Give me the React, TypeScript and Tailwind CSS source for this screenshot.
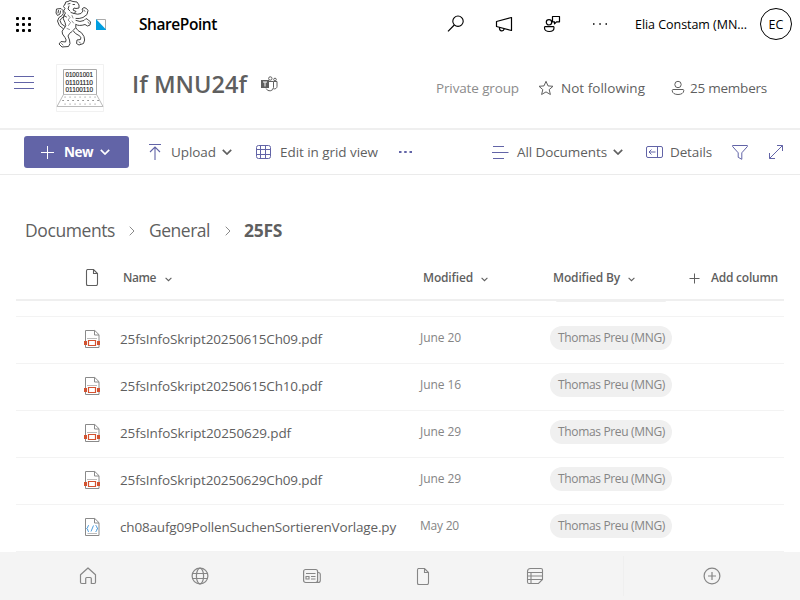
import { useLayoutEffect, useRef, useState, type ReactNode } from "react";

/** Single line of text whose tracking is computed so it spans `w` pixels. */
function Fit({ w, children, className = "" }: { w: number; children: string; className?: string }) {
  const ref = useRef<HTMLSpanElement>(null);
  const [spacing, setSpacing] = useState(0);
  useLayoutEffect(() => {
    if (ref.current) {
      const natural = ref.current.getBoundingClientRect().width;
      setSpacing((w - natural) / children.length);
    }
  }, [w, children]);
  return (
    <span ref={ref} className={`inline-block shrink-0 justify-self-start whitespace-nowrap ${className}`} style={{ letterSpacing: spacing }}>
      {children}
    </span>
  );
}

function Icon({ w = 16, h = 16, className = "", children }: { w?: number; h?: number; className?: string; children: ReactNode }) {
  return (
    <svg
      width={w}
      height={h}
      viewBox={`0 0 ${w} ${h}`}
      fill="none"
      stroke="currentColor"
      strokeWidth="1"
      className={`shrink-0 ${className}`}
    >
      {children}
    </svg>
  );
}

function Chevron({ className = "" }: { className?: string }) {
  return (
    <Icon w={10} h={6} className={className}>
      <path d="M.8.8 5 5 9.2.8" strokeWidth="1.7" />
    </Icon>
  );
}

function SmallChevron() {
  return (
    <Icon w={7} h={5} className="mt-0.5">
      <path d="M.6.8 3.5 3.7 6.4.8" strokeWidth="1.1" />
    </Icon>
  );
}

function Lion() {
  return (
    <Icon w={37} h={48} className="text-[#444]">
      <g strokeWidth="1" strokeLinejoin="round" strokeLinecap="round">
        <path d="M10 4Q10 1 13 1.500L15 .5 18 1.500 22 2 24 5 24 8 21 8.500 19 8 18 10 21 11.500 19 13.500 16 12.500" />
        <path d="M10 4 8.500 6.500 10 8.500 8.500 11 10.500 13 9 15.500 11.500 17M13 4 15 3.500M18 4.500h1.500M14 6 13 9 15 11" />
        <path d="M19 13.500Q23 15 26 13.500L28 11 27 9 29 7.500 31.500 8.500 33 10.500 32 14.500 28 17.500Q24 19 21 18.500" />
        <path d="M21 20.500Q25 22.500 29 20.500L31 18.500 33.500 20 35.500 22 35 25 32.500 26 30 24.500Q24 26.500 21 24.500" />
        <path d="M9 15Q7 19 10 22.500 12 26 9 28.500 6 31 7.500 34L10 37.500Q12 40 10.500 42L6 41.500 4 44 7 47 13.500 46.500Q16 44 14.500 40L13 36Q14 33 17 31.500" />
        <path d="M21 24.500Q22 28 18 30.500 20 34 24 35.500 27 37 25.500 39.500L22 40 21.500 43.500 24 45 28.500 43.500Q30.500 40 29 36.500 27 32 23 30.500L21 28" />
        <path d="M8.500 29Q3 26 2.500 21 3 17 7 15.500 9 14 8 10.500L6 8.500 1.500 9 1 13 2.500 15.500 5 14 5.500 11M10 26.500Q5 24 5 20.500 6 18 9 16.500M3.500 10.500 3 13" />
        <path d="M13 15 15 17.500 13 20 15.500 22.500 13.500 25.500M17 15.500 18 18M17 21 18.500 23M12 28.500 14.500 29.500" strokeWidth=".6" />
        <path d="M29 10 30 11.500M33 22 34 23.500M6.500 43.500 8 45M24 42 25.500 43" strokeWidth=".7" />
      </g>
    </Icon>
  );
}

function Laptop() {
  return (
    <svg width="48" height="48" viewBox="0 0 48 48" className="shrink-0" fill="none">
      <path d="M.5.5h47v47H.5z" stroke="#f1f1f1" />
      <path d="M7.5 31V5.5h33V31" stroke="#aaa" />
      <path d="M7.500 30.500h33L47 42.500H1z" stroke="#bbb" />
      <g fill="#222" fontFamily="Liberation Sans, sans-serif" fontSize="6.6" stroke="#222" strokeWidth=".15">
        <text x="9.500" y="13" textLength="27.500" lengthAdjust="spacingAndGlyphs">01001001</text>
        <text x="9.500" y="20.500" textLength="27.500" lengthAdjust="spacingAndGlyphs">01101110</text>
        <text x="9.500" y="28" textLength="27.500" lengthAdjust="spacingAndGlyphs">01100110</text>
      </g>
      <g stroke="#777" strokeWidth="1.1" strokeLinecap="round">
        <path d="M9 33h32" strokeDasharray=".1 4.9" />
        <path d="M7 36.500h36" strokeDasharray=".1 4.9" stroke="#333" />
        <path d="M9 40h32" strokeDasharray=".1 4.9" />
      </g>
    </svg>
  );
}

function Waffle() {
  return (
    <div className="grid shrink-0 grid-cols-3 gap-[3px] text-black">
      {Array.from({ length: 9 }, (_, i) => (
        <span key={i} className="size-[3px] rounded-[1px] bg-black" />
      ))}
    </div>
  );
}

function TopBar() {
  return (
    <header className="flex h-12 items-center pl-4 pr-2 text-black">
      <Waffle />
      <div className="ml-6 flex h-12 w-[51px] items-center">
        <Lion />
        <svg width="10" height="11" viewBox="0 0 10 11" className="ml-1 shrink-0">
          <path d="M.5.5h9v10h-9z" fill="#fff" stroke="#aaa" />
          <path d="M0 0 10 10.500V11H0z" fill="#009ee0" />
        </svg>
      </div>
      <Fit w={78} className="ml-[33px] text-[15.500px] font-semibold">SharePoint</Fit>
      <div className="ml-[230px] flex items-center">
        <Icon w={18} h={18}>
          <circle cx="11" cy="6.200" r="5.200" strokeWidth="1.100" />
          <path d="M7.300 10 1 16.300" strokeWidth="1.200" />
        </Icon>
        <Icon w={18} h={18} className="ml-[30px]">
          <path d="M1.500 6.500 16.500 2.500v13L1.500 11.500zM4.500 12.500v.8a2.300 2.300 0 0 0 4.600.5" strokeWidth="1.200" strokeLinejoin="round" />
        </Icon>
        <Icon w={18} h={18} className="ml-[30px]">
          <circle cx="6" cy="7.300" r="2.700" strokeWidth="1.200" />
          <path d="M2 11.700h8.500c.5 0 .5.500.5 1 0 2.500-2.300 3.800-4.800 3.800S1.500 15.200 1.500 12.700c0-.6 0-1 .5-1zM9.500 1.500h7v5.300h-3l-2 2V6.800h-2z" strokeWidth="1.200" strokeLinejoin="round" />
        </Icon>
        <Icon w={16} h={4} className="ml-[31px]">
          <path d="M1 2h1.500M7.300 2h1.500M13.500 2H15" strokeWidth="1.500" />
        </Icon>
      </div>
      <Fit w={112} className="ml-[27px] mt-px text-[12.500px]">Elia Constam (MN...</Fit>
      <div className="ml-auto flex size-8 items-center justify-center rounded-full border border-black pt-[2px]">
        <Fit w={15} className="text-[12.500px]">EC</Fit>
      </div>
    </header>
  );
}

function SiteHeader() {
  return (
    <section className="flex h-[82px] items-start border-b-2 border-[#efefef] pl-[14px]">
      <Icon w={20} h={15} className="mt-[27px] text-[#6264a7]">
        <path d="M0 1.500h20M0 7.500h20M0 13.500h20" strokeWidth="1.100" />
      </Icon>
      <div className="ml-[22px] mt-4"><Laptop /></div>
      <Fit w={115} className="ml-7 mt-[19px] text-[23.500px] font-semibold leading-[34px]">If MNU24f</Fit>
      <Icon w={17} h={17} className="ml-[14px] mt-7">
        <path d="M0 4h8v8H0z" fill="currentColor" stroke="none" />
        <path d="M2 6h4M4 6v4.500" stroke="#fff" />
        <circle cx="9.300" cy="2.500" r="1.700" />
        <circle cx="14" cy="3.500" r="1.300" />
        <path d="M8 5.500h4.500v6a3.800 3.800 0 0 1-7.300 1M12.500 5.500H16v5a2.500 2.500 0 0 1-3.500 2.200" />
      </Icon>
      <div className="ml-auto mt-[29px] flex h-[22px] items-center pr-[33px]">
        <Fit w={83} className="text-[13.500px] text-[#8c8c8c]">Private group</Fit>
        <Icon w={16} h={16} className="ml-[19px]">
          <path d="m8 1.300 2 4.600 5 .4-3.800 3.300 1.200 4.900L8 11.900l-4.400 2.600 1.200-4.900L1 6.300l5-.4z" strokeLinejoin="round" />
        </Icon>
        <Fit w={84} className="ml-[7px] text-[13.500px]">Not following</Fit>
        <Icon w={14} h={16} className="ml-[26px]">
          <circle cx="7" cy="4.500" r="3.200" />
          <path d="M2 9.500h10c.6 0 .8.500.8 1 0 2.700-2.600 4-5.800 4s-5.800-1.300-5.800-4c0-.5.200-1 .8-1z" />
        </Icon>
        <Fit w={77} className="ml-[5px] text-[13.500px]">25 members</Fit>
      </div>
    </section>
  );
}

function CommandBar() {
  return (
    <nav className="flex h-[45px] items-center border-b border-[#ebebeb] pl-6 pr-4 text-[13.500px]">
      <button className="flex h-8 w-[105px] items-center rounded-[3px] bg-[#6264a7] pl-[17px] text-white">
        <Icon w={13} h={13}>
          <path d="M6.500 0v13M0 6.500h13" />
        </Icon>
        <Fit w={29} className="ml-[10px] font-bold">New</Fit>
        <Chevron className="ml-[7px]" />
      </button>
      <Icon w={12} h={16} className="ml-5 text-[#6264a7]">
        <path d="M0 .5h12M6 16V3M1 8l5-5 5 5" strokeWidth="1.100" />
      </Icon>
      <Fit w={45} className="ml-[10px]">Upload</Fit>
      <Chevron className="ml-[6px]" />
      <Icon w={16} h={16} className="ml-6 text-[#6264a7]">
        <rect x=".5" y="1.500" width="14" height="13" rx="2" />
        <path d="M4.500 1.500v13M9.500 1.500v13M.5 5.500h14M.5 10.500h14" />
      </Icon>
      <Fit w={98} className="ml-2">Edit in grid view</Fit>
      <Icon w={14} h={4} className="ml-[21px] text-[#6264a7]">
        <path d="M0 2h2.500M5.200 2h2.500M10.500 2H13" strokeWidth="2" />
      </Icon>
      <div className="ml-auto flex items-center">
        <Icon w={17} h={15} className="text-[#6264a7]">
          <path d="M1 1.500h11M0 7.500h16.500M1 13.500h11" />
        </Icon>
        <Fit w={90} className="ml-2">All Documents</Fit>
        <Chevron className="ml-[6px]" />
        <Icon w={17} h={14} className="ml-[23px] text-[#6264a7]">
          <rect x=".5" y="1.500" width="16" height="11" rx="1.500" />
          <path d="M11.500 1.500v11M9.500 7H3M5.500 4.500 3 7l2.500 2.500" />
        </Icon>
        <Fit w={42} className="ml-[7px]">Details</Fit>
        <Icon w={16} h={16} className="ml-5 text-[#6264a7]">
          <path d="M.6 1.500h14.800v1L9.800 8.800v6.500l-3.600-2V8.800L.6 2.500z" strokeLinejoin="round" />
        </Icon>
        <Icon w={16} h={16} className="ml-5 text-[#6264a7]">
          <path d="M1.500 14.500l13-13M9 1.500h5.500V7M1.500 9v5.500H7" />
        </Icon>
      </div>
    </nav>
  );
}

function Breadcrumb() {
  const arrow = (
    <Icon w={6} h={10} className="text-[#8a8a8a]">
      <path d="m.7.7 4.300 4.300L.7 9.300" />
    </Icon>
  );
  return (
    <div className="mt-[39px] flex h-8 items-center pl-[25px] text-[17.500px]">
      <Fit w={90}>Documents</Fit>
      <span className="mx-[14px] pt-px">{arrow}</span>
      <Fit w={61}>General</Fit>
      <span className="ml-[15px] mr-[13px] pt-px">{arrow}</span>
      <Fit w={38} className="font-bold">25FS</Fit>
    </div>
  );
}

function FilePage({ className = "" }: { className?: string }) {
  return (
    <Icon w={14} h={17} className={className}>
      <path d="M1.500 2Q1.500.5 2.700.5H8.500L12.500 4.500V14.800Q12.500 16.500 11.300 16.500H2.700Q1.500 16.500 1.500 14.800zM8.500.5V4.500H12.500" strokeWidth="1.100" />
    </Icon>
  );
}

function PdfIcon() {
  return (
    <svg width="18" height="20" viewBox="0 0 18 20" fill="none" className="shrink-0">
      <path d="M2.500 18.500V1.500h9.300l4.200 4.200v12.800zM11.500 1.500v4.500h4.500" fill="#fff" stroke="#8a8a8a" />
      <path d="M4 9.500h10" stroke="#bbb" />
      <path d="M1 12h3v4H1zM14 12h3v4h-3z" fill="#d35230" />
      <path d="M5.500 11.500h7v5h-7z" fill="#fff" stroke="#d35230" strokeWidth="1.200" />
    </svg>
  );
}

function CodeIcon() {
  return (
    <svg width="18" height="20" viewBox="0 0 18 20" fill="none" className="shrink-0">
      <path d="M2.500 18.500V1.500h9.300l4.200 4.200v12.800zM11.500 1.500v4.500h4.500" fill="#fff" stroke="#8a8a8a" />
      <path d="M6 8.500q-1.200 0-1.200 1.300T3.500 11.500q1.300.2 1.300 1.700T6 14.500M12.500 8.500q1.200 0 1.200 1.300T15 11.500q-1.300.2-1.300 1.700t-1.200 1.300M10.500 8.500l-2.500 6" stroke="#3b93d9" strokeWidth=".9" />
      <path d="M4.500 16.500H14" stroke="#bbb" />
    </svg>
  );
}

const rows = [
  { name: "25fsInfoSkript20250615Ch09.pdf", w: 202, date: "June 20", dw: 41 },
  { name: "25fsInfoSkript20250615Ch10.pdf", w: 202, date: "June 16", dw: 41 },
  { name: "25fsInfoSkript20250629.pdf", w: 171, date: "June 29", dw: 41 },
  { name: "25fsInfoSkript20250629Ch09.pdf", w: 202, date: "June 29", dw: 41 },
  { name: "ch08aufg09PollenSuchenSortierenVorlage.py", w: 276, date: "May 20", dw: 39 },
];

const columns = "grid grid-cols-[104px_300px_130px_136px_98px]";

function FileTable() {
  return (
    <div className="mx-4 mt-[9px]">
      <div className={`${columns} h-[46px] items-center border-b-2 border-[#efefef] pt-0.5 text-[12px] font-semibold`}>
        <FilePage className="mb-0.5 ml-[69px]" />
        <div className="flex items-center gap-[9px] pl-[3px]"><Fit w={33}>Name</Fit><SmallChevron /></div>
        <div className="flex items-center gap-[8px] pl-[3px]"><Fit w={50}>Modified</Fit><SmallChevron /></div>
        <div className="flex items-center gap-[8px] pl-[3px]"><Fit w={67}>Modified By</Fit><SmallChevron /></div>
        <div className="flex items-center gap-[11px] pl-[3px]">
          <Icon w={11} h={11}><path d="M5.500.5v10M.5 5.500h10" /></Icon>
          <Fit w={67}>Add column</Fit>
        </div>
      </div>
      <div className={`${columns} h-4 border-b border-[#f3f3f3]`}>
        <div className="col-start-4 ml-[6px] h-px w-[110px] rounded-b-full bg-[#f0f0f0]" />
      </div>
      {rows.map((row) => (
        <div key={row.name} className={`${columns} h-[47px] items-center border-b border-[#f3f3f3]`}>
          <div className="pb-[2px] pl-[67px]">{row.name.endsWith(".py") ? <CodeIcon /> : <PdfIcon />}</div>
          <Fit w={row.w} className="pb-[2px] text-[13.500px]">{row.name}</Fit>
          <Fit w={row.dw} className="pb-[5px] text-[12px] text-[#858585]">{row.date}</Fit>
          <div className="mb-[5px] flex h-6 w-[122px] items-center rounded-full bg-[#f0f0f0] pl-2 text-[#858585]">
            <Fit w={107} className="text-[12px]">Thomas Preu (MNG)</Fit>
          </div>
        </div>
      ))}
    </div>
  );
}

function BottomNav() {
  return (
    <footer className="flex h-12 items-center bg-[#f4f4f4] pl-8 text-[#868686]">
      <div className="flex w-[112px] justify-center">
        <Icon w={18} h={18}>
          <path d="M1.500 7.700 9 1l7.500 6.700v7.600q0 1.200-1.200 1.200h-3V11.500q0-1-1-1H7.700q-1 0-1 1v5h-4q-1.200 0-1.200-1.200z" strokeLinejoin="round" strokeWidth="1.200" />
        </Icon>
      </div>
      <div className="flex w-[112px] justify-center">
        <Icon w={18} h={18}>
          <circle cx="9" cy="9" r="7.900" strokeWidth="1.200" />
          <ellipse cx="9" cy="9" rx="3.600" ry="7.900" strokeWidth="1.200" />
          <path d="M2 6.500h14M2 11.500h14" strokeWidth="1.200" />
        </Icon>
      </div>
      <div className="flex w-[112px] justify-center">
        <Icon w={18} h={16}>
          <rect x=".6" y="1.500" width="14" height="13" rx="2" strokeWidth="1.200" />
          <path d="M15 4.500q2.300 0 2.300 2v6q0 2-2.300 2h-2M3 5.500h9.500M8 8.500h4.500M8 11h4.500M3 8.500h3V11H3z" strokeWidth="1.100" />
        </Icon>
      </div>
      <div className="flex w-[110px] justify-center pt-px">
        <FilePage />
      </div>
      <div className="flex w-[114px] justify-center">
        <Icon w={18} h={18}>
          <path d="M1.500 4.500q0-3 3-3h10.500q1.500 0 1.500 1.500v9.500l-4 4H3q-1.500 0-1.500-1.500zM1.500 5.500h15M1.500 9h15M1.500 12.500h15M5 5.500v11" strokeWidth="1.100" />
        </Icon>
      </div>
      <div className="ml-[31px] flex h-10 grow items-center justify-center border-l border-[#efefef]">
        <Icon w={18} h={18} className="-ml-px">
          <circle cx="9" cy="9" r="7.900" strokeWidth="1.200" />
          <path d="M9 5v8M5 9h8" strokeWidth="1.200" />
        </Icon>
      </div>
    </footer>
  );
}

export default function App() {
  return (
    <main className="h-[600px] w-[800px] overflow-hidden bg-white font-['Open_Sans','Noto_Sans',sans-serif] leading-5 text-[#5f5f5f]">
      <TopBar />
      <SiteHeader />
      <CommandBar />
      <Breadcrumb />
      <FileTable />
      <BottomNav />
    </main>
  );
}
